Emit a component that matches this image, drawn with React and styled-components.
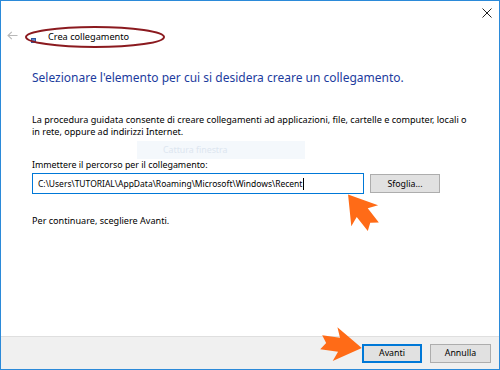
import React from "react";
import styled, { createGlobalStyle } from "styled-components";

const Global = createGlobalStyle`
  html, body { margin: 0; padding: 0; background: #fff; }
  body { font-family: "Noto Sans", "Liberation Sans", sans-serif; }
`;

const Window = styled.div`
  position: relative;
  box-sizing: border-box;
  width: 500px;
  height: 370px;
  border: 1px solid #2b8ad9;
  background: #fff;
  display: flex;
  flex-direction: column;
  overflow: hidden;
`;

const TitleBar = styled.div`
  height: 24px;
  display: flex;
  justify-content: flex-end;
  align-items: center;
  padding-right: 7px;
`;

const CloseBtn = styled.div`
  width: 10px;
  height: 10px;
  display: flex;
  align-items: center;
  justify-content: center;
`;

const NavRow = styled.div`
  height: 24px;
  display: flex;
  align-items: center;
  padding-left: 6px;
`;

const BackArrow = styled.div`
  width: 11px;
  height: 10px;
  display: flex;
  align-items: center;
  margin-top: -4px;
  margin-right: 7px;
`;

const TitleWrap = styled.div`
  position: relative;
  display: flex;
  align-items: center;
  height: 22px;
  width: 140px;
  padding-left: 6px;
  box-sizing: border-box;
`;

const Ellipse = styled.svg`
  position: absolute;
  left: 0;
  top: 0;
  pointer-events: none;
`;

const SmallIcon = styled.div`
  width: 3px;
  height: 3px;
  background: #5b82c8;
  border: 0.5px solid #2d55a0;
  margin-top: 6px;
  margin-right: 12px;
`;

const TitleText = styled.span`
  font-size: 9.2px;
  color: #000;
  margin-top: -1px;
`;

const Content = styled.div`
  flex: 1;
  padding: 21px 20px 0 31px;
  display: flex;
  flex-direction: column;
`;

const Heading = styled.div`
  font-size: 12px;
  line-height: 16px;
  color: #1c3c9e;
`;

const Para = styled.p`
  margin: 0;
  margin-top: ${(p) => p.$mt || 0}px;
  font-size: 9.1px;
  line-height: 12px;
  color: #000;
`;

const Ghost = styled.div`
  align-self: flex-start;
  margin-left: 105px;
  margin-top: 3px;
  width: 168px;
  height: 18px;
  background: #f4f8fc;
  color: #dde6f0;
  font-size: 8.8px;
  line-height: 18px;
  padding-left: 26px;
  box-sizing: border-box;
`;

const Label = styled.div`
  font-size: 8.9px;
  line-height: 12px;
`;

const InputRow = styled.div`
  display: flex;
  align-items: center;
  gap: 6px;
  margin-top: 2px;
`;

const PathInput = styled.div`
  box-sizing: border-box;
  width: 332px;
  height: 21px;
  border: 1px solid #0078d7;
  font-size: 8.5px;
  padding-left: 5px;
  white-space: nowrap;
  display: flex;
  align-items: center;
`;

const Caret = styled.span`
  display: inline-block;
  width: 1px;
  height: 12px;
  background: #000;
  margin-left: 1px;
`;

const Button = styled.div`
  box-sizing: border-box;
  width: ${(p) => p.$w || 61}px;
  height: ${(p) => p.$h || 20}px;
  background: #e1e1e1;
  border: ${(p) => (p.$primary ? "2px solid #0078d7" : "1px solid #adadad")};
  font-size: 8.8px;
  display: flex;
  align-items: center;
  justify-content: center;
  color: #000;
`;

const Footer = styled.div`
  height: 33px;
  box-sizing: border-box;
  background: #f0f0f0;
  border-top: 1px solid #dfdfdf;
  display: flex;
  justify-content: flex-end;
  align-items: center;
  gap: 8px;
  padding-right: 8px;
`;

const Annotation = styled.svg`
  position: absolute;
  left: ${(p) => p.$x}px;
  top: ${(p) => p.$y}px;
  pointer-events: none;
`;

function OrangeArrow({ x, y, angle }) {
  return (
    <Annotation $x={x - 30} $y={y - 30} width="60" height="60" viewBox="-30 -30 60 60">
      <g transform={`rotate(${angle})`}>
        <polygon
          points="-20,-7 -2,-7 -6,-17 21,0 -6,17 -2,7 -20,7 -15,0"
          fill="#ff6b17"
        />
      </g>
    </Annotation>
  );
}

export default function App() {
  return (
    <>
      <Global />
      <Window>
        <TitleBar>
          <CloseBtn>
            <svg width="10" height="10" viewBox="0 0 10 10">
              <path d="M0.5 0.5 L9.5 9.5 M9.5 0.5 L0.5 9.5" stroke="#222" strokeWidth="1" />
            </svg>
          </CloseBtn>
        </TitleBar>
        <NavRow>
          <BackArrow>
            <svg width="11" height="9" viewBox="0 0 11 9">
              <path d="M10.5 4.5 H1 M4.8 0.8 L1 4.5 L4.8 8.2" stroke="#b8b8b8" strokeWidth="1.1" fill="none" />
            </svg>
          </BackArrow>
          <TitleWrap>
            <Ellipse width="140" height="22" viewBox="0 0 140 22">
              <ellipse cx="70" cy="11" rx="69" ry="10" fill="none" stroke="#8b1a1f" strokeWidth="2" />
            </Ellipse>
            <SmallIcon />
            <TitleText>Crea collegamento</TitleText>
          </TitleWrap>
        </NavRow>
        <Content>
          <Heading>Selezionare l'elemento per cui si desidera creare un collegamento.</Heading>
          <Para $mt={28}>
            La procedura guidata consente di creare collegamenti ad applicazioni, file, cartelle e computer, locali o
            <br />
            in rete, oppure ad indirizzi Internet.
          </Para>
          <Ghost>Cattura finestra</Ghost>
          <Label>Immettere il percorso per il collegamento:</Label>
          <InputRow>
            <PathInput>
              C:\Users\TUTORIAL\AppData\Roaming\Microsoft\Windows\Recent
              <Caret />
            </PathInput>
            <Button $w={70} $h={19}>Sfoglia...</Button>
          </InputRow>
          <Para $mt={21}>Per continuare, scegliere Avanti.</Para>
        </Content>
        <Footer>
          <Button $primary $w={60} $h={19}>Avanti</Button>
          <Button $w={61} $h={19}>Annulla</Button>
        </Footer>
        <OrangeArrow x={360} y={210} angle={-128} />
        <OrangeArrow x={340} y={344} angle={8} />
      </Window>
    </>
  );
}
